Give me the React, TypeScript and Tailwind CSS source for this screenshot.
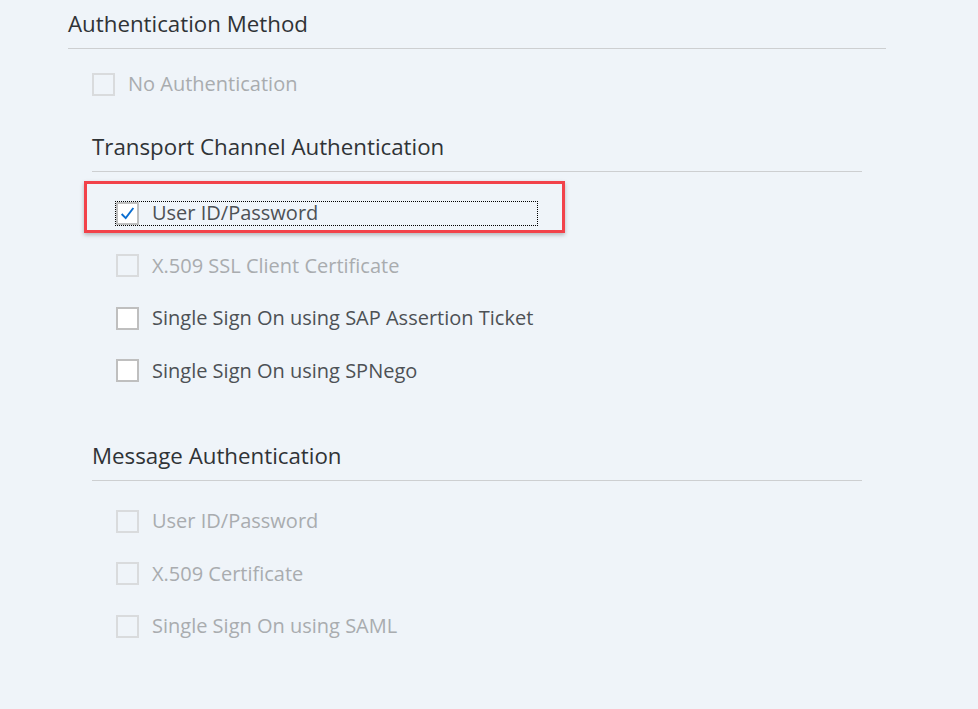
import React from "react";

const FONT = { fontFamily: '"Open Sans", "Noto Sans", Arial, sans-serif' };

// --- Checkbox row ---
interface RowProps {
  label: string;
  checked?: boolean;
  disabled?: boolean;
}

const Check = () => (
  <svg width="17" height="17" viewBox="0 0 16 16">
    <path d="M2.5 8.5 L6.3 12.3 L13.5 2.8" fill="none" stroke="#0a6ed1" strokeWidth="1.8" />
  </svg>
);

const CheckRow = ({ label, checked = false, disabled = false }: RowProps) => (
  <div className="flex items-center h-[52.5px]">
    <div
      className={
        disabled
          ? "w-[23px] h-[23px] border-2 border-[#d9dbdd] shrink-0"
          : "w-[23px] h-[23px] border-2 border-[#bfbfbf] bg-white shrink-0 flex items-center justify-center"
      }
    >
      {checked && <Check />}
    </div>
    <span
      className={
        disabled
          ? "ml-[13px] text-[20px] text-[#a9acaf]"
          : "ml-[13px] text-[20px] text-[#4d5155]"
      }
    >
      {label}
    </span>
  </div>
);

const SectionTitle = ({ title }: { title: string }) => (
  <div className="h-[49px] flex items-center border-b border-[#cdcfd1] text-[22.3px] text-[#2f3336]">
    {title}
  </div>
);

export default function App() {
  return (
    <div className="w-[978px] h-[709px] bg-[#eff4f9] overflow-hidden" style={FONT}>
      <div className="pl-[68px] w-[886px]">
        <SectionTitle title="Authentication Method" />
        <div className="pl-[24px]">
          <div className="h-[70px] mb-[4px] flex items-center">
            <div className="w-[23px] h-[23px] border-2 border-[#d9dbdd]" />
            <span className="ml-[13px] text-[20px] text-[#a9acaf]">No Authentication</span>
          </div>
          <div className="w-[770px]">
            <SectionTitle title="Transport Channel Authentication" />
          </div>
          <div className="pl-[24px] pt-[15px]">
            {/* selected + focused row, highlighted in the screenshot */}
            <div className="relative flex items-center h-[52.5px]">
              <div className="absolute left-[-32px] top-[-6px] w-[481px] h-[52px] border-[3px] border-[#f2424a] shadow-[0_2px_4px_rgba(0,0,0,0.25)] pointer-events-none" />
              <div className="flex items-center w-[421px] h-[23px] outline outline-1 outline-dotted outline-black">
                <div className="w-[23px] h-[23px] border-2 border-[#bfbfbf] bg-white shrink-0 flex items-center justify-center">
                  <Check />
                </div>
                <span className="ml-[13px] text-[20px] text-[#4d5155]">User ID/Password</span>
              </div>
            </div>
            <CheckRow label="X.509 SSL Client Certificate" disabled />
            <CheckRow label="Single Sign On using SAP Assertion Ticket" />
            <CheckRow label="Single Sign On using SPNego" />
          </div>
          <div className="w-[770px] mt-[35px]">
            <SectionTitle title="Message Authentication" />
          </div>
          <div className="pl-[24px] pt-[14px]">
            <CheckRow label="User ID/Password" disabled />
            <CheckRow label="X.509 Certificate" disabled />
            <CheckRow label="Single Sign On using SAML" disabled />
          </div>
        </div>
      </div>
    </div>
  );
}
